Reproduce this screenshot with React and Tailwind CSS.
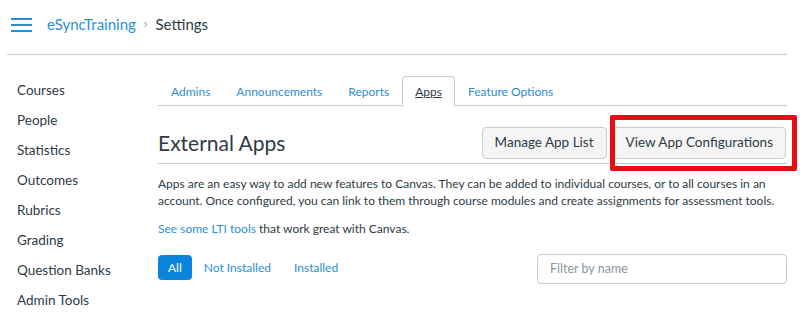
import React from "react";

const sideItems = [
  "Courses",
  "People",
  "Statistics",
  "Outcomes",
  "Rubrics",
  "Grading",
  "Question Banks",
  "Admin Tools",
];

const tabs = ["Admins", "Announcements", "Reports", "Apps", "Feature Options"];

export default function App() {
  return (
    <div className="relative w-[800px] h-[314px] overflow-hidden bg-white font-['Lato','Noto_Sans',sans-serif] text-[#2d3b45]">
      {/* top bar */}
      <header className="ml-[7px] w-[780px] h-[55px] border-b border-[#c7cdd1] flex items-center pl-[4px] pb-[6px]">
        <svg width="21" height="14" viewBox="0 0 21 14" className="mt-[2px]">
          <rect x="0" y="0" width="21" height="2" fill="#2b8fd6" />
          <rect x="0" y="6" width="21" height="2" fill="#2b8fd6" />
          <rect x="0" y="12" width="21" height="2" fill="#2b8fd6" />
        </svg>
        <span className="ml-[15px] text-[15px] text-[#2b8fd6]">eSyncTraining</span>
        <span className="ml-[8px] mr-[8px] text-[13px] text-[#8b969e]">›</span>
        <span className="text-[15px]">Settings</span>
      </header>

      <div className="flex">
        {/* sidebar */}
        <nav className="w-[158px] pl-[17px] pt-[20px]">
          {sideItems.map((s) => (
            <div key={s} className="h-[30px] leading-[30px] text-[13.5px]">
              {s}
            </div>
          ))}
        </nav>

        {/* main */}
        <main className="w-[629px] pt-[21px]">
          <div className="flex border-b border-[#c7cdd1] h-[30px]">
            {tabs.map((t) =>
              t === "Apps" ? (
                <div
                  key={t}
                  className="px-3 h-[30px] leading-[29px] text-[12px] bg-white border border-b-0 border-[#c7cdd1] rounded-t-[4px] underline -mb-px"
                >
                  {t}
                </div>
              ) : (
                <div key={t} className="px-3 h-[29px] leading-[29px] text-[12px] text-[#2b8fd6] border border-transparent">
                  {t}
                </div>
              )
            )}
          </div>

          <div className="flex items-center justify-between h-[58px] border-b border-[#c7cdd1] pt-[16px]">
            <h1 className="text-[21px] leading-none">External Apps</h1>
            <div className="flex gap-[6px]">
              <button className="h-[32px] px-[12px] bg-[#f5f5f5] border border-[#c7cdd1] rounded-[4px] text-[13.5px] text-[#2d3b45]">
                Manage App List
              </button>
              <button className="h-[32px] px-[12px] bg-[#f5f5f5] border border-[#c7cdd1] rounded-[4px] text-[13.5px] text-[#2d3b45] mr-px">
                View App Configurations
              </button>
            </div>
          </div>

          <p className="mt-[11px] text-[12px] leading-[17px]">
            Apps are an easy way to add new features to Canvas. They can be added to individual courses, or to all
            courses in an account. Once configured, you can link to them through course modules and create assignments
            for assessment tools.
          </p>
          <p className="mt-[11px] text-[12px] leading-[17px]">
            <span className="text-[#2b8fd6]">See some LTI tools</span> that work great with Canvas.
          </p>

          <div className="mt-[17px] flex items-start justify-between">
            <div className="flex items-center text-[12px] text-[#2b8fd6] mt-[1px]">
              <span className="h-[25px] leading-[25px] px-[10px] rounded-[4px] bg-[#0b84db] text-white">All</span>
              <span className="ml-[12px]">Not Installed</span>
              <span className="ml-[23px]">Installed</span>
            </div>
            <div className="w-[250px] h-[30px] border border-[#c7cdd1] rounded-[4px] flex items-center pl-[12px] text-[12.5px] text-[#8b969e]">
              Filter by name
            </div>
          </div>
        </main>
      </div>

      {/* highlight annotation */}
      <div className="absolute left-[610px] top-[115px] w-[187px] h-[56px] border-[5px] border-[#ec0a13] rounded-[2px]" />
    </div>
  );
}
